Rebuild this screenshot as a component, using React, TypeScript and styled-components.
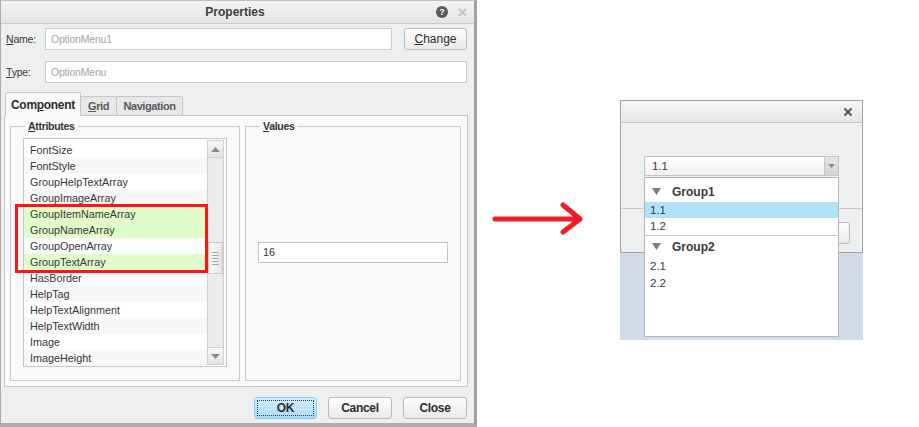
import React from "react";
import styled, { createGlobalStyle } from "styled-components";

const GlobalStyle = createGlobalStyle`
  html, body {
    margin: 0;
    padding: 0;
    background: #ffffff;
  }
  body {
    font-family: "Liberation Sans", Arial, sans-serif;
    color: #333333;
  }
  * {
    box-sizing: border-box;
  }
`;

const attributes = [
  { name: "FontSize" },
  { name: "FontStyle" },
  { name: "GroupHelpTextArray" },
  { name: "GroupImageArray" },
  { name: "GroupItemNameArray", marked: true },
  { name: "GroupNameArray", marked: true },
  { name: "GroupOpenArray" },
  { name: "GroupTextArray", marked: true },
  { name: "HasBorder" },
  { name: "HelpTag" },
  { name: "HelpTextAlignment" },
  { name: "HelpTextWidth" },
  { name: "Image" },
  { name: "ImageHeight" },
];

const groups = [
  { title: "Group1", items: ["1.1", "1.2"] },
  { title: "Group2", items: ["2.1", "2.2"] },
];

export default function App() {
  return (
    <>
      <GlobalStyle />
      <Page>
        <Dialog>
          <TitleBar>
            <span />
            <Title>Properties</Title>
            <TitleIcons>
              <HelpIcon>?</HelpIcon>
              <svg width="9" height="9" viewBox="0 0 9 9">
                <path d="M1 1 L8 8 M8 1 L1 8" stroke="#c4c4c4" strokeWidth="2" />
              </svg>
            </TitleIcons>
          </TitleBar>

          <Body>
            <FieldRow $top={4}>
              <Label>
                <U>N</U>ame:
              </Label>
              <TextBox>OptionMenu1</TextBox>
              <Button $w={63} $gap={12}>
                <U>C</U>hange
              </Button>
            </FieldRow>
            <FieldRow $top={11}>
              <Label>
                <U>T</U>ype:
              </Label>
              <TextBox>OptionMenu</TextBox>
            </FieldRow>

            <Tabs>
              <Tab $active $w={76}>
                Com<U>p</U>onent
              </Tab>
              <Tab $w={37}>
                <U>G</U>rid
              </Tab>
              <Tab $w={67}>
                Navi<U>g</U>ation
              </Tab>
            </Tabs>

            <Panel>
              <Group $w={230}>
                <Legend>
                  <U>A</U>ttributes
                </Legend>
                <ListBox>
                  <Rows>
                    {attributes.map((a, i) => (
                      <Row key={a.name} $marked={!!a.marked} $odd={i % 2 === 1}>
                        {a.name}
                      </Row>
                    ))}
                  </Rows>
                  <ScrollBar>
                    <ScrollButton>
                      <svg width="9" height="5" viewBox="0 0 9 5">
                        <polygon points="0,5 9,5 4.5,0" fill="#8a8a8a" />
                      </svg>
                    </ScrollButton>
                    <Track>
                      <Thumb>
                        <Grip />
                        <Grip />
                        <Grip />
                        <Grip />
                        <Grip />
                      </Thumb>
                    </Track>
                    <ScrollButton $bottom>
                      <svg width="9" height="5" viewBox="0 0 9 5">
                        <polygon points="0,0 9,0 4.5,5" fill="#8a8a8a" />
                      </svg>
                    </ScrollButton>
                  </ScrollBar>
                  <Highlight />
                </ListBox>
              </Group>
              <Group $w={216}>
                <Legend>
                  <U>V</U>alues
                </Legend>
                <ValueBox>16</ValueBox>
              </Group>
            </Panel>

            <Footer>
              <Button $w={63} $primary $bold>
                OK
              </Button>
              <Button $w={64} $bold>
                Cancel
              </Button>
              <Button $w={64} $bold>
                Close
              </Button>
            </Footer>
          </Body>
        </Dialog>

        <ArrowBox>
          <svg width="143" height="40" viewBox="0 0 143 40">
            <path
              d="M18 20 L102 20 M86 6 L103 20 L86 33"
              stroke="#ee1c24"
              strokeWidth="5"
              strokeLinecap="round"
              strokeLinejoin="round"
              fill="none"
            />
          </svg>
        </ArrowBox>

        <RightColumn>
          <MiniDialog>
            <MiniTitle>
              <svg width="10" height="10" viewBox="0 0 10 10">
                <path d="M1.5 1.5 L8.5 8.5 M8.5 1.5 L1.5 8.5" stroke="#5f5f5f" strokeWidth="2.4" />
              </svg>
            </MiniTitle>
            <MiniBody>
              <ComboWrap>
                <Combo>
                  <ComboText>1.1</ComboText>
                  <ComboArrow>
                    <svg width="7" height="4" viewBox="0 0 7 4">
                      <polygon points="0,0 7,0 3.5,4" fill="#8c8c8c" />
                    </svg>
                  </ComboArrow>
                </Combo>
                <Popup>
                  {groups.map((g, gi) => (
                    <React.Fragment key={g.title}>
                      {gi > 0 && <Separator />}
                      <GroupHeader>
                        <svg width="9" height="7" viewBox="0 0 9 7">
                          <polygon points="0,0 9,0 4.5,7" fill="#7d7d7d" />
                        </svg>
                        {g.title}
                      </GroupHeader>
                      {g.items.map((it) => (
                        <Option key={it} $selected={it === "1.1"} $gap={gi > 0}>
                          {it}
                        </Option>
                      ))}
                    </React.Fragment>
                  ))}
                </Popup>
              </ComboWrap>
            </MiniBody>
            <MiniFooter>
              <Button $w={72}>Close</Button>
            </MiniFooter>
          </MiniDialog>
          <BlueArea />
        </RightColumn>
      </Page>
    </>
  );
}

const Page = styled.div`
  display: flex;
  width: 919px;
  height: 427px;
`;

const Dialog = styled.div`
  width: 477px;
  height: 427px;
  display: flex;
  flex-direction: column;
  background: #eeeff1;
  border-top: 1px solid #c2c2c2;
  border-left: 1px solid #a9a9a9;
  border-right: 3px solid #a2a2a2;
  border-bottom: 4px solid #acacac;
`;

const TitleBar = styled.div`
  height: 23px;
  display: grid;
  grid-template-columns: 1fr auto 1fr;
  align-items: center;
  background: linear-gradient(#f4f4f4, #e4e4e4);
  border-bottom: 1px solid #cacaca;
  padding-right: 7px;
`;

const Title = styled.div`
  font-size: 12px;
  font-weight: 700;
  color: #404040;
  padding-left: 2px;
`;

const TitleIcons = styled.div`
  justify-self: end;
  display: flex;
  align-items: center;
  gap: 10px;
`;

const HelpIcon = styled.span`
  width: 12px;
  height: 12px;
  border-radius: 50%;
  background: #5a5a5a;
  color: #ffffff;
  font-size: 9px;
  font-weight: 700;
  display: flex;
  align-items: center;
  justify-content: center;
`;

const Body = styled.div`
  flex: 1;
  display: flex;
  flex-direction: column;
  padding: 0 6px 0 3px;
`;

const U = styled.span`
  text-decoration: underline;
`;

const FieldRow = styled.div<{ $top: number }>`
  display: flex;
  align-items: center;
  height: 22px;
  margin: ${(p) => p.$top}px 1px 0 2px;
`;

const Label = styled.div`
  width: 39px;
  font-size: 10.5px;
  letter-spacing: -0.2px;
  color: #3a3a3a;
`;

const TextBox = styled.div`
  flex: 1;
  height: 22px;
  border: 1px solid #cbcbcb;
  background: #ffffff;
  padding-left: 5px;
  font-size: 10.5px;
  letter-spacing: -0.2px;
  line-height: 20px;
  color: #a3a3a3;
`;

const Button = styled.div<{ $w: number; $gap?: number; $primary?: boolean; $bold?: boolean }>`
  width: ${(p) => p.$w}px;
  height: 22px;
  margin-left: ${(p) => p.$gap ?? 0}px;
  display: flex;
  align-items: center;
  justify-content: center;
  border: 1px solid ${(p) => (p.$primary ? "#8ccbf3" : "#bababa")};
  border-radius: 3px;
  background: ${(p) =>
    p.$primary ? "linear-gradient(#d6effe, #a8daf9)" : "linear-gradient(#fdfdfd, #e9e9e9)"};
  font-size: 12px;
  font-weight: ${(p) => (p.$bold ? 700 : 400)};
  letter-spacing: ${(p) => (p.$bold ? "-0.3px" : "0")};
  color: #2e2e2e;
  outline: ${(p) => (p.$primary ? "1px dotted #3a3a3a" : "none")};
  outline-offset: -4px;
`;

const Tabs = styled.div`
  display: flex;
  align-items: flex-end;
  height: 24px;
  margin: 9px 0 0 1px;
  position: relative;
  z-index: 1;
`;

const Tab = styled.div<{ $active?: boolean; $w: number }>`
  width: ${(p) => p.$w}px;
  height: ${(p) => (p.$active ? 24 : 20)}px;
  margin-left: ${(p) => (p.$active ? 0 : -1)}px;
  display: flex;
  align-items: center;
  justify-content: center;
  border: 1px solid #c6c6c6;
  border-bottom: ${(p) => (p.$active ? "none" : "1px solid #c6c6c6")};
  border-radius: 2px 2px 0 0;
  background: ${(p) => (p.$active ? "#f9f9f9" : "#e7e8ea")};
  font-size: ${(p) => (p.$active ? 12 : 11)}px;
  font-weight: ${(p) => (p.$active ? 700 : 700)};
  letter-spacing: ${(p) => (p.$active ? "-0.3px" : "-0.4px")};
  color: ${(p) => (p.$active ? "#2c2c2c" : "#5a5a5a")};
`;

const Panel = styled.div`
  height: 272px;
  margin-top: -1px;
  display: flex;
  gap: 5px;
  padding: 3px 5px 5px 5px;
  border: 1px solid #c6c6c6;
  background: #f9f9f9;
`;

const Group = styled.fieldset<{ $w: number }>`
  width: ${(p) => p.$w}px;
  margin: 0;
  padding: 5px 12px 0 12px;
  min-width: 0;
  border: 1px solid #c9c9c9;
`;

const Legend = styled.legend`
  padding: 0 3px;
  margin-left: 2px;
  font-size: 10.5px;
  font-weight: 700;
  letter-spacing: -0.3px;
  line-height: 14px;
  color: #333333;
`;

const ListBox = styled.div`
  position: relative;
  width: 204px;
  height: 229px;
  display: flex;
  border: 1px solid #c6c6c6;
  background: #ffffff;
`;

const Rows = styled.div`
  flex: 1;
  padding-top: 3px;
  overflow: hidden;
`;

const Row = styled.div<{ $marked: boolean; $odd: boolean }>`
  height: 16px;
  line-height: 16px;
  padding-left: 6px;
  font-size: 10.8px;
  color: #363636;
  white-space: nowrap;
  background: ${(p) => (p.$marked ? "#e1fccb" : p.$odd ? "#f7f7f7" : "#ffffff")};
`;

const Highlight = styled.div`
  position: absolute;
  left: -9px;
  top: 65px;
  width: 193px;
  height: 69px;
  border: 3px solid #ff1313;
  pointer-events: none;
`;

const ScrollBar = styled.div`
  width: 17px;
  margin: 1px 2px 1px 0;
  display: flex;
  flex-direction: column;
  border: 1px solid #d0d0d0;
  background: #ebebeb;
`;

const ScrollButton = styled.div<{ $bottom?: boolean }>`
  height: 17px;
  display: flex;
  align-items: center;
  justify-content: center;
  background: linear-gradient(#f7f7f7, #e4e4e4);
  border-top: ${(p) => (p.$bottom ? "1px solid #cfcfcf" : "none")};
  border-bottom: ${(p) => (p.$bottom ? "none" : "1px solid #cfcfcf")};
`;

const Track = styled.div`
  flex: 1;
`;

const Thumb = styled.div`
  margin-top: 84px;
  height: 32px;
  display: flex;
  flex-direction: column;
  align-items: center;
  justify-content: center;
  gap: 2px;
  border: 1px solid #c8c8c8;
  background: linear-gradient(to right, #fbfbfb, #e6e6e6);
`;

const Grip = styled.div`
  width: 7px;
  height: 1px;
  background: #a8a8a8;
`;

const ValueBox = styled.div`
  margin-top: 104px;
  width: 190px;
  height: 21px;
  border: 1px solid #c3c3c3;
  background: #ffffff;
  padding-left: 4px;
  font-size: 10.8px;
  line-height: 19px;
  color: #333333;
`;

const Footer = styled.div`
  display: flex;
  justify-content: flex-end;
  gap: 11px;
  margin-top: 10px;
  padding-right: 1px;
`;

const ArrowBox = styled.div`
  width: 143px;
  align-self: flex-start;
  margin-top: 199px;
  display: flex;
`;

const RightColumn = styled.div`
  width: 243px;
  margin-top: 100px;
  display: flex;
  flex-direction: column;
`;

const MiniDialog = styled.div`
  height: 153px;
  display: flex;
  flex-direction: column;
  border: 1px solid #a3a3a3;
  background: #eeeff1;
`;

const MiniTitle = styled.div`
  height: 22px;
  display: flex;
  align-items: center;
  justify-content: flex-end;
  padding-right: 9px;
  border-bottom: 1px solid #c6c6c6;
  background: linear-gradient(#f6f6f6, #e6e6e6);
`;

const MiniBody = styled.div`
  height: 85px;
  padding: 33px 0 0 23px;
`;

const ComboWrap = styled.div`
  position: relative;
  width: 195px;
`;

const Combo = styled.div`
  height: 20px;
  display: flex;
  border: 1px solid #c4c4c4;
  background: linear-gradient(#ffffff, #f1f1f1);
`;

const ComboText = styled.div`
  flex: 1;
  padding-left: 7px;
  font-size: 11.5px;
  line-height: 18px;
  color: #3a3448;
`;

const ComboArrow = styled.div`
  width: 14px;
  display: flex;
  align-items: center;
  justify-content: center;
  border-left: 1px solid #c4c4c4;
  background: linear-gradient(#e6e6e6, #d4d4d4);
`;

const Popup = styled.div`
  position: absolute;
  top: 21px;
  left: 0;
  width: 195px;
  height: 160px;
  z-index: 5;
  padding-top: 3px;
  border: 1px solid #b6b6b6;
  background: #ffffff;
`;

const GroupHeader = styled.div`
  height: 21px;
  display: flex;
  align-items: center;
  gap: 11px;
  padding-left: 7px;
  font-size: 12px;
  font-weight: 700;
  color: #3a3a3a;
`;

const Option = styled.div<{ $selected: boolean; $gap: boolean }>`
  height: 16px;
  line-height: 16px;
  margin-top: ${(p) => (p.$gap ? 1 : 0)}px;
  padding-left: 5px;
  font-size: 11.5px;
  color: #3a3448;
  background: ${(p) => (p.$selected ? "#b1e2fb" : "transparent")};
`;

const Separator = styled.div`
  height: 1px;
  margin-top: 1px;
  background: #c9c9c9;
`;

const MiniFooter = styled.div`
  flex: 1;
  display: flex;
  justify-content: flex-end;
  align-items: flex-start;
  padding: 13px 12px 0 0;
  border-top: 1px solid #cbcbcb;
`;

const BlueArea = styled.div`
  height: 87px;
  background: #d1dbe7;
`;
